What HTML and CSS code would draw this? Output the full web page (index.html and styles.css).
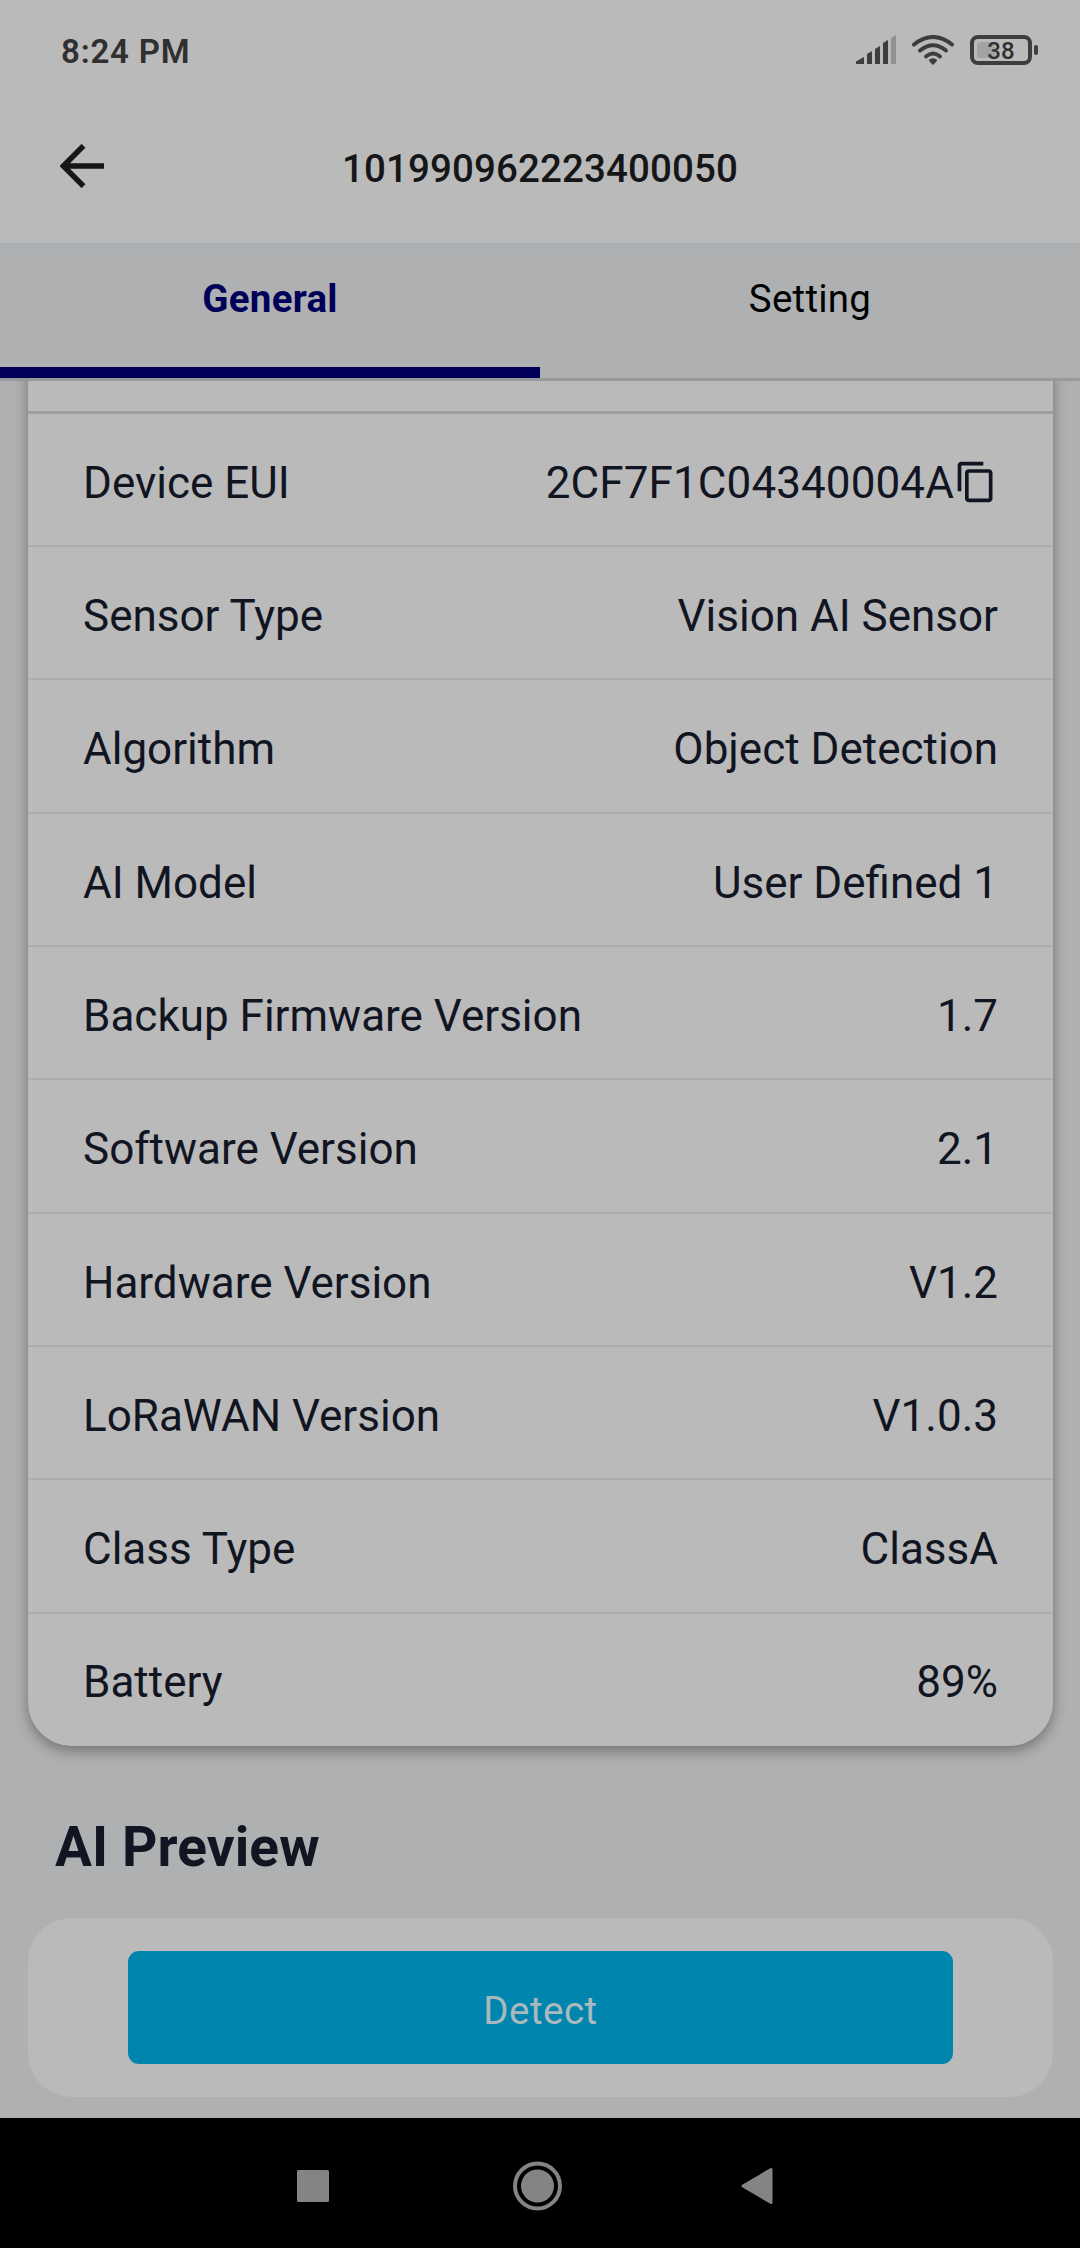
FILE: index.html
```html
<!DOCTYPE html>
<html lang="en">
<head>
<meta charset="utf-8">
<title>Device details</title>
<link rel="stylesheet" href="styles.css">
</head>
<body>
<div class="screen">
  <div class="statusbar">
    <span class="time">8:24 PM</span>
    <svg class="status-icons" width="184" height="32" viewBox="0 0 184 32">
      <g fill="#3d3d3d">
        <path d="M0 29V26.500L8 22V29Z"/>
        <path d="M11 29V19L16 16V29Z"/>
        <path d="M19 29V14L24 11V29Z"/>
        <path d="M27 29V8L32 5V29Z"/>
        <path d="M35 29V3L40 0V29Z" fill="#919191"/>
        <path d="M77 30Q70.500 24.500 74.500 24Q77 22.500 79.500 24Q83.500 24.500 77 30Z"/>
      </g>
      <g fill="none" stroke="#3d3d3d" stroke-width="4" stroke-linecap="round">
        <path d="M58 9.500Q77-5.500 96 9.500"/>
        <path d="M64 15.500Q77 5 90 15.500"/>
        <path d="M70 21.500Q77 15.500 84 21.500"/>
      </g>
      <rect x="121" y="7" width="18" height="16" rx="3" fill="#a3a3a3"/>
      <rect x="116" y="2" width="58" height="26" rx="6" fill="none" stroke="#3d3d3d" stroke-width="4"/>
      <rect x="178" y="10" width="4" height="10" rx="2" fill="#3d3d3d"/>
      <text x="145" y="23.500" class="battery-level">38</text>
    </svg>
  </div>
  <div class="header">
    <svg class="back" width="44" height="44" viewBox="0 0 44 44">
      <path d="M44 22H4M23.500 1.800L3.300 22L23.500 42.200" fill="none" stroke="#151617" stroke-width="5.500"/>
    </svg>
    <h1 class="title">101990962223400050</h1>
    <span></span>
  </div>
  <div class="tabs">
    <div class="tab tab-active">General</div>
    <div class="tab">Setting</div>
  </div>
  <div class="content">
    <div class="info">
      <div class="row-cut"></div>
      <div class="row"><span>Device EUI</span><span class="value eui">2CF7F1C04340004A<svg class="copy" width="44" height="44" viewBox="0 0 24 24"><path fill="#111522" d="M16 1H4c-1.100 0-2 .9-2 2v14h2V3h12V1zm3 4H8c-1.100 0-2 .9-2 2v14c0 1.100.9 2 2 2h11c1.100 0 2-.9 2-2V7c0-1.100-.9-2-2-2zm0 16H8V7h11v14z"/></svg></span></div>
      <div class="row"><span>Sensor Type</span><span class="value">Vision AI Sensor</span></div>
      <div class="row"><span>Algorithm</span><span class="value">Object Detection</span></div>
      <div class="row"><span>AI Model</span><span class="value">User Defined 1</span></div>
      <div class="row"><span>Backup Firmware Version</span><span class="value">1.7</span></div>
      <div class="row"><span>Software Version</span><span class="value">2.1</span></div>
      <div class="row"><span>Hardware Version</span><span class="value">V1.2</span></div>
      <div class="row"><span>LoRaWAN Version</span><span class="value">V1.0.3</span></div>
      <div class="row"><span>Class Type</span><span class="value">ClassA</span></div>
      <div class="row"><span>Battery</span><span class="value">89%</span></div>
    </div>
    <h2 class="section">AI Preview</h2>
    <div class="preview"><button class="detect">Detect</button></div>
  </div>
  <div class="navbar">
    <svg width="480" height="50" viewBox="0 0 480 50">
      <g fill="#848484">
        <rect x="0" y="9" width="32" height="32" rx="1.500"/>
        <circle cx="240.500" cy="25" r="16.500"/>
        <path d="M474 8.500V41.500L446 25Z" stroke="#848484" stroke-width="3" stroke-linejoin="round"/>
      </g>
      <circle cx="240.500" cy="25" r="22.500" fill="none" stroke="#848484" stroke-width="4"/>
    </svg>
  </div>
</div>
</body>
</html>
```

FILE: styles.css
```css
* { box-sizing: border-box; }
body { margin: 0; background: #aeb0b2; font-family: Roboto, "Liberation Sans", sans-serif; color: #111522; }
.screen { width: 1080px; height: 2248px; display: flex; flex-direction: column; overflow: hidden; }

.statusbar { height: 102px; flex: none; background: #bababa; display: flex; justify-content: space-between; padding: 35px 36px 0 61px; }
.time { font-size: 33px; line-height: 33px; font-weight: 600; letter-spacing: 0.8px; color: #303030; }
.status-icons { margin-right: 4px; }
.battery-level { font-size: 24px; letter-spacing: 0; text-anchor: middle; fill: #303030; font-weight: 500; }

.header { height: 141px; flex: none; background: #bababa; display: grid; grid-template-columns: 104px 1fr 104px; align-items: center; padding-bottom: 13px; }
.back { margin-left: 60px; }
.title { margin: 0; padding-top: 5px; text-align: center; font-size: 38.5px; font-weight: 500; letter-spacing: 0.12px; color: #151617; }

.tabs { height: 138px; flex: none; display: grid; grid-template-columns: 1fr 1fr; background: linear-gradient(#abafb2, #aeb0b2 12px); border-bottom: 3px solid #979899; }
.tab { text-align: center; font-size: 38.5px; line-height: 112px; letter-spacing: 0.25px; color: #000; }
.tab-active { font-weight: 700; color: #000059; border-bottom: 11px solid #000059; }

.content { height: 1737px; flex: none; padding: 0 27px 0 28px; overflow: hidden; }
.info { height: 1405px; margin-top: -40px; padding-top: 40px; background: #bababa; border-radius: 0 0 44px 44px; box-shadow: 0 5px 14px rgba(0, 0, 0, 0.35); display: flex; flex-direction: column; }
.row-cut { height: 32.5px; flex: none; border-bottom: 3px solid #9f9f9f; }
.row { height: 133.35px; flex: none; display: flex; align-items: center; justify-content: space-between; padding: 7px 55px 0; font-size: 44px; border-bottom: 2px solid #adadad; }
.row:last-child { height: 132px; padding-top: 5px; border-bottom: 0; }
.value { display: flex; align-items: center; }
.eui { letter-spacing: 0.1px; }
.copy { margin-top: -1px; }
.section { margin: 0; padding-left: 27px; font-size: 55px; line-height: 64px; font-weight: 700; letter-spacing: 0.1px; margin-top: 69px; }
.preview { height: 179px; margin-top: 39px; background: #bababa; border-radius: 44px; padding: 33px 100px; }
.detect { display: block; width: 100%; height: 113px; padding: 5px 0 0; border: 0; border-radius: 11px; background: #0085af; color: #a9b9be; font: 38.5px Roboto, sans-serif; letter-spacing: 0.5px; }

.navbar { height: 130px; flex: none; background: #000; padding: 43px 0 0 297px; }
```
